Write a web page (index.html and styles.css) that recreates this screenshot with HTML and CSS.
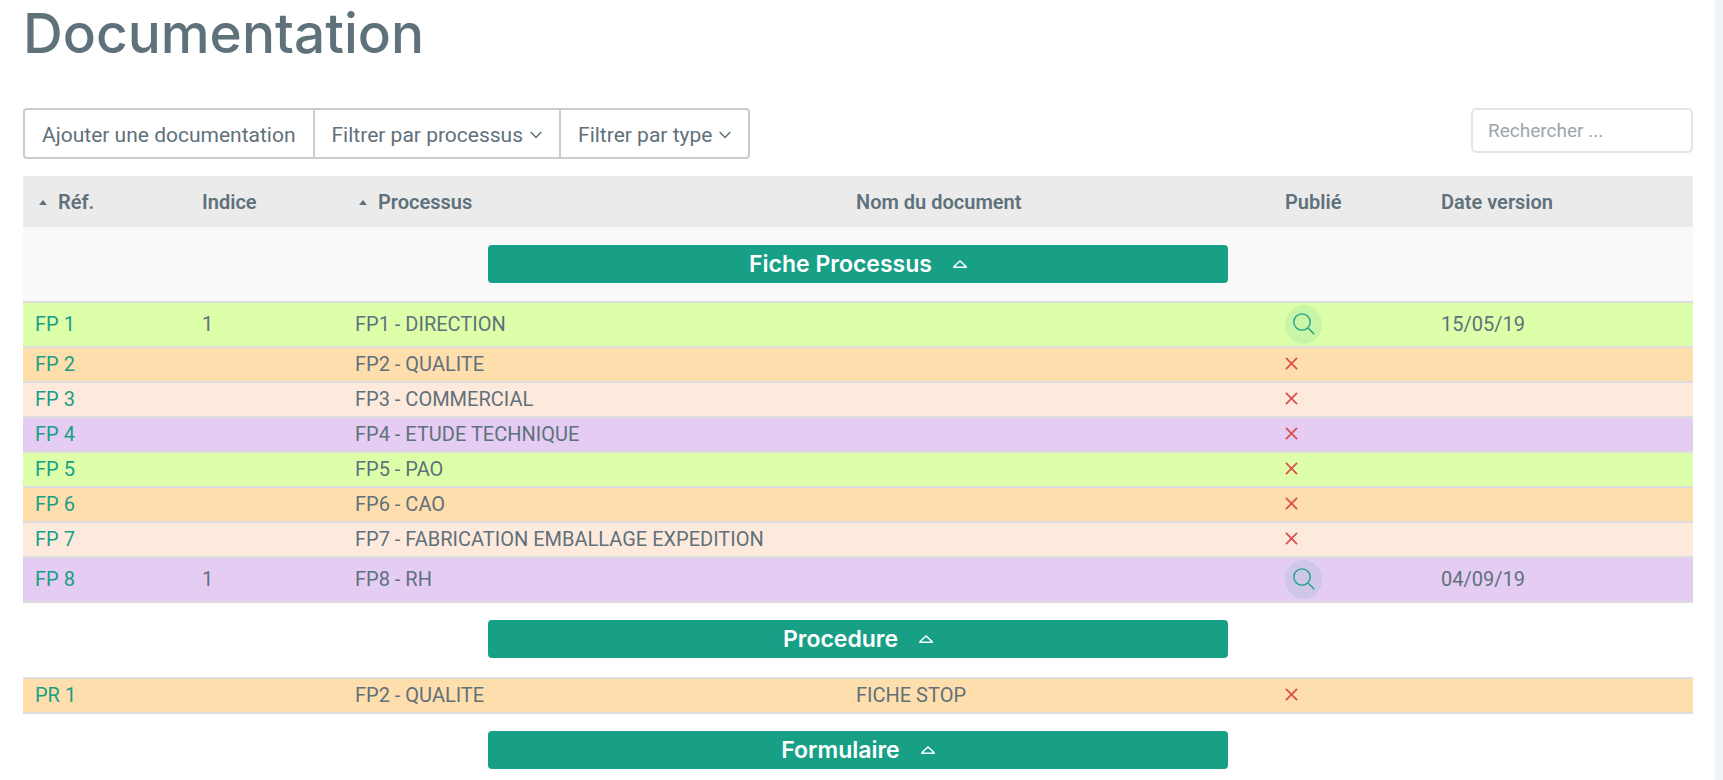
FILE: index.html
```html
<!DOCTYPE html>
<html lang="fr">
<head>
    <meta charset="UTF-8">
    <meta name="viewport" content="width=device-width, initial-scale=1.0">
    <title>Documentation</title>
    <link rel="stylesheet" href="styles.css">
</head>
<body>
    <!-- Icones -->
    <svg class="sprite" aria-hidden="true">
        <symbol id="chevron" viewBox="0 0 12 8"><path d="M0.7 1l5.3 5.5L11.3 1"/></symbol>
        <symbol id="triangle" viewBox="0 0 14 8"><path d="M7 1L1 6.5V7.2H13V6.5Z"/></symbol>
        <symbol id="cross" viewBox="0 0 14 14"><path d="M1 1l12 12M13 1L1 13"/></symbol>
        <symbol id="loupe" viewBox="0 0 22 22"><circle cx="9" cy="9" r="8.2"/><path d="M15 15l6.3 6.2"/></symbol>
    </svg>

    <div class="container">
        <h1>Documentation</h1>

        <div class="toolbar">
            <div class="btn-group">
                <button type="button" class="btn">Ajouter une documentation</button>
                <button type="button" class="btn">Filtrer par processus <svg class="chevron"><use href="#chevron"/></svg></button>
                <button type="button" class="btn">Filtrer par type <svg class="chevron"><use href="#chevron"/></svg></button>
            </div>
            <input type="search" class="search" placeholder="Rechercher ..." aria-label="Rechercher">
        </div>

        <table>
            <colgroup>
                <col class="col-ref">
                <col class="col-indice">
                <col class="col-processus">
                <col>
                <col class="col-publie">
                <col class="col-date">
            </colgroup>
            <thead>
                <tr>
                    <th class="sorted">Réf.</th>
                    <th>Indice</th>
                    <th class="sorted">Processus</th>
                    <th>Nom du document</th>
                    <th>Publié</th>
                    <th>Date version</th>
                </tr>
            </thead>
            <tbody>
                <tr class="group striped">
                    <td colspan="6"><button type="button" class="btn-type">Fiche Processus <svg class="triangle"><use href="#triangle"/></svg></button></td>
                </tr>
                <tr class="vert">
                    <td><a href="#">FP 1</a></td>
                    <td>1</td>
                    <td>FP1 - DIRECTION</td>
                    <td></td>
                    <td><button type="button" class="btn-view" aria-label="Voir FP 1"><svg class="loupe"><use href="#loupe"/></svg></button></td>
                    <td>15/05/19</td>
                </tr>
                <tr class="orange">
                    <td><a href="#">FP 2</a></td>
                    <td></td>
                    <td>FP2 - QUALITE</td>
                    <td></td>
                    <td><svg class="cross"><use href="#cross"/></svg></td>
                    <td></td>
                </tr>
                <tr class="rose">
                    <td><a href="#">FP 3</a></td>
                    <td></td>
                    <td>FP3 - COMMERCIAL</td>
                    <td></td>
                    <td><svg class="cross"><use href="#cross"/></svg></td>
                    <td></td>
                </tr>
                <tr class="violet">
                    <td><a href="#">FP 4</a></td>
                    <td></td>
                    <td>FP4 - ETUDE TECHNIQUE</td>
                    <td></td>
                    <td><svg class="cross"><use href="#cross"/></svg></td>
                    <td></td>
                </tr>
                <tr class="vert">
                    <td><a href="#">FP 5</a></td>
                    <td></td>
                    <td>FP5 - PAO</td>
                    <td></td>
                    <td><svg class="cross"><use href="#cross"/></svg></td>
                    <td></td>
                </tr>
                <tr class="orange">
                    <td><a href="#">FP 6</a></td>
                    <td></td>
                    <td>FP6 - CAO</td>
                    <td></td>
                    <td><svg class="cross"><use href="#cross"/></svg></td>
                    <td></td>
                </tr>
                <tr class="rose">
                    <td><a href="#">FP 7</a></td>
                    <td></td>
                    <td>FP7 - FABRICATION EMBALLAGE EXPEDITION</td>
                    <td></td>
                    <td><svg class="cross"><use href="#cross"/></svg></td>
                    <td></td>
                </tr>
                <tr class="violet">
                    <td><a href="#">FP 8</a></td>
                    <td>1</td>
                    <td>FP8 - RH</td>
                    <td></td>
                    <td><button type="button" class="btn-view" aria-label="Voir FP 8"><svg class="loupe"><use href="#loupe"/></svg></button></td>
                    <td>04/09/19</td>
                </tr>
                <tr class="group">
                    <td colspan="6"><button type="button" class="btn-type">Procedure <svg class="triangle"><use href="#triangle"/></svg></button></td>
                </tr>
                <tr class="orange">
                    <td><a href="#">PR 1</a></td>
                    <td></td>
                    <td>FP2 - QUALITE</td>
                    <td>FICHE STOP</td>
                    <td><svg class="cross"><use href="#cross"/></svg></td>
                    <td></td>
                </tr>
                <tr class="group">
                    <td colspan="6"><button type="button" class="btn-type">Formulaire <svg class="triangle"><use href="#triangle"/></svg></button></td>
                </tr>
            </tbody>
        </table>
    </div>
</body>
</html>
```

FILE: styles.css
```css
* { margin: 0; padding: 0; box-sizing: border-box; }
body {
    font-family: Roboto, Arial, sans-serif;
    font-size: 20px;
    line-height: 29px;
    color: #5f717b;
    background: #eff4f9;
    padding-right: 8px;
}
svg { fill: none; stroke: currentColor; }
.sprite { display: none; }
.container {
    background: #fff;
    min-height: 100vh;
    padding: 0 22px 0 23px;
}
h1 {
    font-family: Inter, sans-serif;
    font-size: 55px; font-weight: 500;
    line-height: 66px;
    margin-bottom: 42px;
}

/* Barre d'outils */
.toolbar {
    display: flex; justify-content: space-between; align-items: flex-start;
    margin-bottom: 17px;
}
.btn-group { display: flex; }
.btn {
    display: flex; align-items: center; gap: 7px;
    height: 51px; padding: 2px 17px 0;
    font: 21px Roboto, Arial, sans-serif;
    color: inherit; background: #fff;
    border: 2px solid #ccc;
    cursor: pointer;
}
.btn + .btn { margin-left: -2px; }
.btn:first-child { border-radius: 4px 0 0 4px; }
.btn:last-child { border-radius: 0 4px 4px 0; }
.btn:hover { background: #f5f5f5; }
.chevron { width: 12px; height: 8px; stroke-width: 1.5; }
.search {
    width: 222px; height: 45px; padding: 0 15px;
    font: 19px Roboto, Arial, sans-serif;
    color: inherit; background: #fff;
    border: 2px solid #e4e4e4; border-radius: 5px;
}
.search::placeholder { color: #9aa5ae; }

/* Tableau */
table {
    width: 100%;
    table-layout: fixed;
    border-collapse: separate; border-spacing: 0;
}
.col-ref { width: 167px; }
.col-indice { width: 153px; }
.col-processus { width: 30%; }
.col-publie { width: 156px; }
.col-date { width: 264px; }
th {
    height: 51px; padding: 2px 12px 0;
    text-align: left; font-weight: 600;
    background: #ebebeb;
}
.sorted::before {
    content: "";
    display: inline-block;
    margin: 0 11px 4px 4px;
    border: 4px solid transparent;
    border-top: 0; border-bottom: 5px solid #5f717b;
}
td {
    padding: 2px 12px;
    border-top: 2px solid #ddd;
    vertical-align: middle;
}
td a { color: #17a086; text-decoration: none; }
.vert { background: #ddffaa; }
.orange { background: #ffdead; }
.rose { background: #fdeadd; }
.violet { background: #e4ccf3; }
.cross { display: block; width: 13px; height: 13px; margin-bottom: 2px; color: #d9534f; stroke-width: 2; }
.btn-view {
    display: flex; align-items: center; justify-content: center;
    width: 37px; height: 39px; padding-bottom: 2px;
    color: #17a086; background: rgba(24, 160, 134, 0.1);
    border: 0; border-radius: 50%;
    cursor: pointer;
}
.loupe { width: 22px; height: 22px; stroke-width: 1.3; }

/* Lignes de type */
.group td { padding: 17px 12px 19px; }
.group.striped td { padding: 18px 12px; background: #f9f9f9; border-top: 0; }
.btn-type {
    display: flex; align-items: center; justify-content: center; gap: 21px;
    width: 45%; height: 38px; margin: 0 auto;
    font: 600 23px Inter, sans-serif;
    color: #fff; background: #17a086;
    border: 0; border-radius: 4px;
    cursor: pointer;
}
.triangle { width: 14px; height: 8px; stroke-width: 1.5; }
```
